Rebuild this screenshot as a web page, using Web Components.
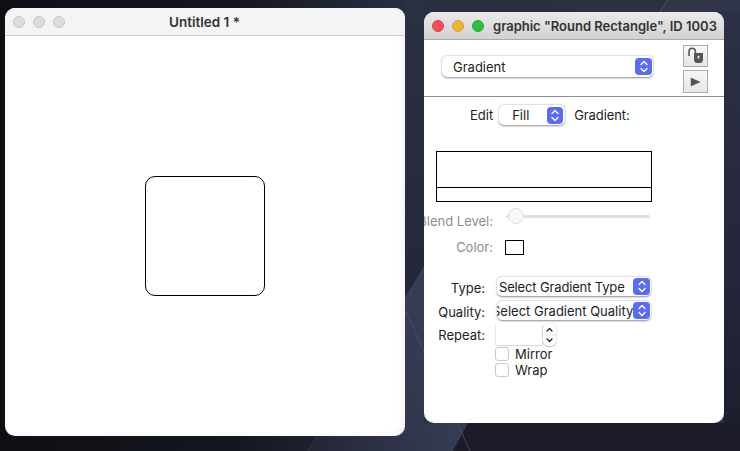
<!DOCTYPE html>
<html>
<head>
<meta charset="utf-8">
<title>Gradient inspector</title>
<style>
  html, body { margin: 0; padding: 0; background: #1b1c27; }
</style>
</head>
<body>
<desk-top>
  <mac-window label="Untitled 1 *" style="left:5px;top:8px;width:400px;height:428px">
    <shape-canvas></shape-canvas>
  </mac-window>
  <mac-window active label='graphic "Round Rectangle", ID 1003' style="left:424px;top:12px;width:300px;height:411px">
    <gradient-panel></gradient-panel>
  </mac-window>
</desk-top>

<script>
class DeskTop extends HTMLElement {
  constructor() {
    super();
    this.attachShadow({ mode: "open" }).innerHTML = `
    <style>
    :host {
      display: block;
      position: relative;
      width: 740px;
      height: 451px;
      overflow: hidden;
      font-family: Inter, "Liberation Sans", sans-serif;
      background: #1b1c27;
    }
    svg { position: absolute; inset: 0; }
    </style>
    <svg width="740" height="451" viewBox="0 0 740 451">
      <defs>
        <linearGradient id="base" gradientUnits="userSpaceOnUse" x1="0" y1="0" x2="740" y2="0">
          <stop offset="0" stop-color="#0e0f14"/>
          <stop offset="0.32" stop-color="#15171f"/>
          <stop offset="0.55" stop-color="#2a2e41"/>
          <stop offset="1" stop-color="#2d3145"/>
        </linearGradient>
        <linearGradient id="gap" x1="0" y1="0" x2="0" y2="1">
          <stop offset="0" stop-color="#2c3043"/>
          <stop offset="1" stop-color="#242738"/>
        </linearGradient>
        <linearGradient id="side" gradientUnits="userSpaceOnUse" x1="0" y1="0" x2="0" y2="451">
          <stop offset="0" stop-color="#2d3145"/>
          <stop offset="0.65" stop-color="#23263a"/>
          <stop offset="1" stop-color="#1c1d2a"/>
        </linearGradient>
        <linearGradient id="facet" gradientUnits="userSpaceOnUse" x1="310" y1="451" x2="440" y2="400">
          <stop offset="0" stop-color="#222635"/>
          <stop offset="0.7" stop-color="#31364c"/>
          <stop offset="1" stop-color="#353b52"/>
        </linearGradient>
      </defs>
      <rect width="740" height="451" fill="url(#base)"/>
      <rect x="405" y="0" width="19" height="300" fill="url(#gap)"/>
      <rect x="724" y="0" width="16" height="451" fill="url(#side)"/>
      <polygon points="424,267 308,451 453,451 468,423 424,423" fill="url(#facet)"/>
      <polygon points="468,423 740,423 740,451 453,451" fill="#1b1c27"/>
      <polygon points="660,12 668,0 740,0 740,12" fill="#30354a"/>
      <line x1="405" y1="310" x2="470" y2="451" stroke="#4c5167" stroke-width="0.8"/>
      <line x1="660" y1="12" x2="668" y2="0" stroke="#565b70" stroke-width="0.8"/>
      <line x1="424" y1="267" x2="405" y2="303" stroke="#454a60" stroke-width="0.8"/>
      <line x1="317" y1="436" x2="308" y2="451" stroke="#3a3f52" stroke-width="0.8"/>
    </svg>
    <slot></slot>
  `;
  }
}

class MacWindow extends HTMLElement {
  constructor() {
    super();
    this.attachShadow({ mode: "open" });
  }

  connectedCallback() {
    this.shadowRoot.innerHTML = `
    <style>
    :host {
      display: flex;
      flex-direction: column;
      position: absolute;
      background: #fff;
      border-radius: 10px;
      overflow: hidden;
    }
    :host(:not([active])) { box-shadow: inset -6px -4px 6px -4px rgba(0,0,0,.06); }
    .bar {
      flex: none;
      height: 28px;
      box-sizing: border-box;
      display: flex;
      align-items: center;
      padding-left: 8px;
      background: #f4f4f4;
      border-bottom: 1px solid #cfcfcf;
    }
    :host([active]) .bar {
      background: linear-gradient(#eaeaea, #d2d2d2);
      border-bottom-color: #a9a9a9;
    }
    .dot {
      width: 12px;
      height: 12px;
      box-sizing: border-box;
      border-radius: 50%;
      margin-right: 8px;
      background: #dcdcdc;
      border: 1px solid #c6c6c6;
    }
    :host([active]) .dot:nth-child(1) { background: #f25056; border-color: #df3e41; }
    :host([active]) .dot:nth-child(2) { background: #f0b633; border-color: #dc9f2a; }
    :host([active]) .dot:nth-child(3) { background: #27c13f; border-color: #1dad2b; }
    .title {
      flex: 1;
      text-align: center;
      font-size: 13.5px;
      font-weight: 600;
      color: #333;
      white-space: nowrap;
      padding-right: 69px;
    }
    :host([active]) .title { text-align: left; padding: 0 0 0 1px; font-size: 13px; }
    .body { flex: 1; position: relative; min-height: 0; }
    </style>
    <div class="bar">
      <span class="dot"></span><span class="dot"></span><span class="dot"></span>
      <span class="title"></span>
    </div>
    <div class="body"><slot></slot></div>
  `;
    this.shadowRoot.querySelector(".title").textContent = this.getAttribute("label");
  }
}

class ShapeCanvas extends HTMLElement {
  constructor() {
    super();
    this.attachShadow({ mode: "open" }).innerHTML = `
    <style>
    :host { display: block; padding: 140px 0 0 140px; }
    .shape {
      width: 120px;
      height: 120px;
      box-sizing: border-box;
      border: 1px solid #000;
      border-radius: 10px;
    }
    </style>
    <div class="shape"></div>
  `;
  }
}

class PopUp extends HTMLElement {
  constructor() {
    super();
    this.attachShadow({ mode: "open" });
  }

  connectedCallback() {
    this.shadowRoot.innerHTML = `
    <style>
    :host {
      display: flex;
      align-items: center;
      box-sizing: border-box;
      background: #fff;
      border-radius: 5px;
      box-shadow: 0 0.5px 2px rgba(0,0,0,.45);
      font-size: 13px;
      color: #222;
      overflow: hidden;
      white-space: nowrap;
      position: relative;
    }
    .text { flex: 1; overflow: hidden; display: flex; }
    .arrow {
      flex: none;
      width: var(--arrow-width, 17px);
      height: 100%;
      max-height: 17px;
      border-radius: 4px;
      background: #5a6cf6;
      display: flex;
      align-items: center;
      justify-content: center;
      margin-right: var(--arrow-gap, 1px);
    }
    </style>
    <div class="text"><span><slot></slot></span></div>
    <div class="arrow">
      <svg width="8" height="13" viewBox="0 0 8 13" fill="none" stroke="#fff" stroke-width="1.4" stroke-linecap="round" stroke-linejoin="round">
        <path d="M1 4.6 4 1.6 7 4.6"/><path d="M1 8.4 4 11.4 7 8.4"/>
      </svg>
    </div>
  `;
  }
}

class GradientPanel extends HTMLElement {
  constructor() {
    super();
    this.attachShadow({ mode: "open" }).innerHTML = `
    <style>
    :host {
      display: block;
      font-size: 13px;
      color: #222;
      line-height: 16px;
    }
    .head {
      height: 57px;
      box-sizing: border-box;
      border-bottom: 1px solid #8c8c8c;
      display: flex;
      padding: 5px 16px 0 18px;
      justify-content: space-between;
    }
    .head pop-up { width: 211px; height: 21px; margin-top: 11px; padding-left: 11px; }
    .tools { display: flex; flex-direction: column; gap: 3px; }
    .tool {
      width: 25px;
      height: 22px;
      box-sizing: border-box;
      border: 1px solid #ababab;
      background: linear-gradient(#f7f7f7, #e6e6e6);
      display: flex;
      align-items: center;
      justify-content: center;
    }
    .tool + .tool { height: 23px; }
    .edit {
      display: flex;
      align-items: center;
      height: 20px;
      margin-top: 8px;
      padding-left: 46px;
    }
    .edit pop-up {
      width: 66px;
      height: 20px;
      margin: 0 9px 0 6px;
      padding-left: 13px;
      --arrow-width: 16px;
      --arrow-gap: 2px;
    }
    .edit .tail { letter-spacing: -0.1px; }
    .well {
      width: 216px;
      height: 51px;
      box-sizing: border-box;
      margin: 26px 0 0 12px;
      border: 1px solid #000;
      display: flex;
      flex-direction: column;
      justify-content: flex-end;
    }
    .well div { height: 13px; border-top: 1px solid #000; }
    .row { display: flex; align-items: center; }
    .label {
      flex: none;
      width: 69px;
      display: flex;
      justify-content: flex-end;
      white-space: nowrap;
    }
    .off { color: #8d8d8d; }
    .blend { height: 16px; margin-top: 11px; }
    .track {
      width: 144px;
      height: 3px;
      margin: -10px 0 0 13px;
      border-radius: 2px;
      background: #e0e0e0;
      position: relative;
    }
    .knob {
      position: absolute;
      left: 2px;
      top: -7px;
      width: 16px;
      height: 16px;
      box-sizing: border-box;
      border-radius: 50%;
      background: #f9f9f9;
      border: 1px solid #dcdcdc;
    }
    .color { height: 16px; margin-top: 10px; }
    .swatch {
      width: 19px;
      height: 15px;
      box-sizing: border-box;
      border: 1px solid #000;
      margin-left: 12px;
    }
    .form { margin-top: 22px; }
    .form .label { width: 61px; }
    .form .pick .label { padding-top: 2px; }
    .form pop-up { width: 154px; height: 19px; margin-left: 12px; }
    .form .gap { margin-top: 5px; }
    .type { padding-left: 2px; letter-spacing: -0.15px; }
    .quality { margin-left: -5px; }
    .repeat { margin-top: 4px; align-items: flex-start; }
    .repeat .label { margin-top: 3px; }
    .field {
      width: 46px;
      height: 21px;
      box-sizing: border-box;
      margin-left: 11px;
      background: #fff;
      box-shadow: 0 0.5px 1.5px rgba(0,0,0,.4);
    }
    .stepper {
      width: 13px;
      height: 22px;
      margin-left: 1px;
      border-radius: 5px;
      box-shadow: 0 0.5px 1.5px rgba(0,0,0,.45);
      display: block;
    }
    .check { height: 16px; padding-left: 71px; }
    .box {
      width: 14px;
      height: 14px;
      box-sizing: border-box;
      border: 1px solid #c9c9c9;
      border-radius: 3px;
      margin-right: 6px;
      background: #fff;
    }
    </style>
    <div class="head">
      <pop-up>Gradient</pop-up>
      <div class="tools">
        <div class="tool">
          <svg width="17" height="18" viewBox="0 0 17 18">
            <path d="M2 9V4.4a3.2 3.2 0 0 1 6.4 0v1.6" fill="none" stroke="#555" stroke-width="1.6"/>
            <path d="M7 6h9v6.5a3.5 3.5 0 0 1-3.5 3.5h-2A3.5 3.5 0 0 1 7 12.5z" fill="#555"/>
            <rect x="10.7" y="8.4" width="1.6" height="3.4" rx=".8" fill="#eee"/>
          </svg>
        </div>
        <div class="tool">
          <svg width="11" height="10" viewBox="0 0 11 10"><path d="M1 1l9 4-9 4z" fill="#555" stroke="#555" stroke-width=".5"/></svg>
        </div>
      </div>
    </div>
    <div class="edit">
      <span>Edit</span>
      <pop-up>Fill</pop-up>
      <span class="tail">Gradient:</span>
    </div>
    <div class="well"><div></div></div>
    <div class="row blend off">
      <span class="label">Blend Level:</span>
      <div class="track"><div class="knob"></div></div>
    </div>
    <div class="row color off">
      <span class="label">Color:</span>
      <div class="swatch"></div>
    </div>
    <div class="form">
      <div class="row pick">
        <span class="label">Type:</span>
        <pop-up><span class="type">Select Gradient Type</span></pop-up>
      </div>
      <div class="row pick gap">
        <span class="label">Quality:</span>
        <pop-up><span class="quality">Select Gradient Quality</span></pop-up>
      </div>
      <div class="row repeat">
        <span class="label">Repeat:</span>
        <div class="field"></div>
        <svg class="stepper" width="13" height="22" viewBox="0 0 13 22" fill="none" stroke="#222" stroke-width="1.3" stroke-linecap="round" stroke-linejoin="round">
          <rect width="13" height="22" rx="5" fill="#fff" stroke="none"/>
          <path d="M0 11h13" stroke="#e2e2e2" stroke-width="1"/>
          <path d="M4 7 6.5 4.5 9 7"/><path d="M4 15 6.5 17.5 9 15"/>
        </svg>
      </div>
      <div class="row check"><span class="box"></span>Mirror</div>
      <div class="row check"><span class="box"></span>Wrap</div>
    </div>
  `;
  }
}

customElements.define("desk-top", DeskTop);
customElements.define("mac-window", MacWindow);
customElements.define("shape-canvas", ShapeCanvas);
customElements.define("pop-up", PopUp);
customElements.define("gradient-panel", GradientPanel);
</script>
</body>
</html>
